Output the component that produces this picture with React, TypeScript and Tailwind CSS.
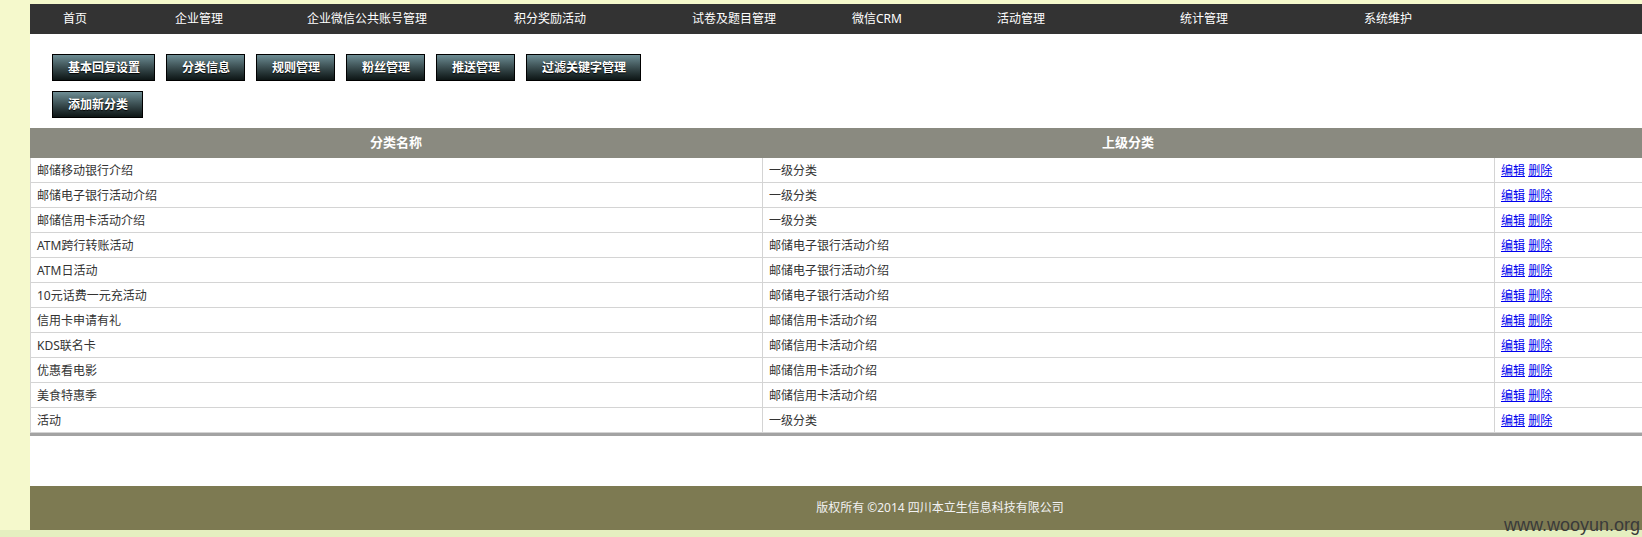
const navItems = [
  { label: '首页', w: 'w-[112px]' },
  { label: '企业管理', w: 'w-[132px]' },
  { label: '企业微信公共账号管理', w: 'w-[207px]' },
  { label: '积分奖励活动', w: 'w-[178px]' },
  { label: '试卷及题目管理', w: 'w-[160px]' },
  { label: '微信CRM', w: 'w-[145px]' },
  { label: '活动管理', w: 'w-[183px]' },
  { label: '统计管理', w: 'w-[184px]' },
  { label: '系统维护', w: 'w-[120px]' },
];

const buttons = ['基本回复设置', '分类信息', '规则管理', '粉丝管理', '推送管理', '过滤关键字管理'];

const rows = [
  ['邮储移动银行介绍', '一级分类'],
  ['邮储电子银行活动介绍', '一级分类'],
  ['邮储信用卡活动介绍', '一级分类'],
  ['ATM跨行转账活动', '邮储电子银行活动介绍'],
  ['ATM日活动', '邮储电子银行活动介绍'],
  ['10元话费一元充活动', '邮储电子银行活动介绍'],
  ['信用卡申请有礼', '邮储信用卡活动介绍'],
  ['KDS联名卡', '邮储信用卡活动介绍'],
  ['优惠看电影', '邮储信用卡活动介绍'],
  ['美食特惠季', '邮储信用卡活动介绍'],
  ['活动', '一级分类'],
];

function ToolButton({ label }: { label: string }) {
  return (
    <button className="h-[27px] border border-black bg-linear-to-b from-[#6e8e95] to-[#0e1616] pl-[15px] pr-[14px] text-[12px] font-bold leading-[25px] text-white [text-shadow:0_1px_1px_#000]">
      {label}
    </button>
  );
}

export default function App() {
  return (
    <div className="relative flex min-h-[537px] flex-col bg-[#f5f9cc] font-['Noto_Sans','Noto_Sans_CJK_SC',sans-serif] text-[12px] text-[#333]">
      <div className="pl-[30px] pt-[4px]">
        <div className="bg-white">
          {/* top menu */}
          <nav className="flex h-[30px] items-center bg-[#333] pl-[33px] text-[12px] text-white">
            {navItems.map((item) => (
              <span key={item.label} className={`${item.w} shrink-0`}>
                {item.label}
              </span>
            ))}
          </nav>

          {/* action buttons */}
          <div className="flex flex-col gap-[10px] pl-[22px] pt-[20px]">
            <div className="flex gap-[11px]">
              {buttons.map((b) => (
                <ToolButton key={b} label={b} />
              ))}
            </div>
            <div className="flex">
              <ToolButton label="添加新分类" />
            </div>
          </div>

          {/* category table */}
          <div className="mt-[10px] border-b-[3px] border-[#a3a3a3]">
            <div className="grid h-[30px] grid-cols-[732px_732px_1fr] items-center bg-[#8a8a80] text-[13px] font-bold text-white">
              <div className="text-center">分类名称</div>
              <div className="text-center">上级分类</div>
              <div />
            </div>
            {rows.map(([name, parent]) => (
              <div
                key={name}
                className="grid h-[25px] grid-cols-[732px_732px_1fr] border-b border-[#d4d4d4] pt-px leading-[23px]"
              >
                <div className="-mt-px border-l border-[#d4d4d4] pl-[6px] pt-px">{name}</div>
                <div className="-mt-px border-l border-[#d4d4d4] pl-[6px] pt-px">{parent}</div>
                <div className="-mt-px border-l border-[#d4d4d4] pl-[6px] pt-px">
                  <a href="#" className="text-[#0000ee] underline">编辑</a>{' '}
                  <a href="#" className="text-[#0000ee] underline">删除</a>
                </div>
              </div>
            ))}
          </div>

          <div className="h-[50px]" />

          {/* footer */}
          <footer className="flex h-[44px] items-center justify-center bg-[#7d7a52] pl-[208px] text-[12px] text-[#f2f2f2]">
            版权所有 ©2014 四川本立生信息科技有限公司
          </footer>
        </div>
      </div>
      <div className="h-[7px] bg-[#e5efc0]" />

      <span className="absolute right-[2px] top-[514px] font-['Liberation_Sans',sans-serif] text-[18px] leading-[22px] text-[#3a3a3a]">
        www.wooyun.org
      </span>
    </div>
  );
}
